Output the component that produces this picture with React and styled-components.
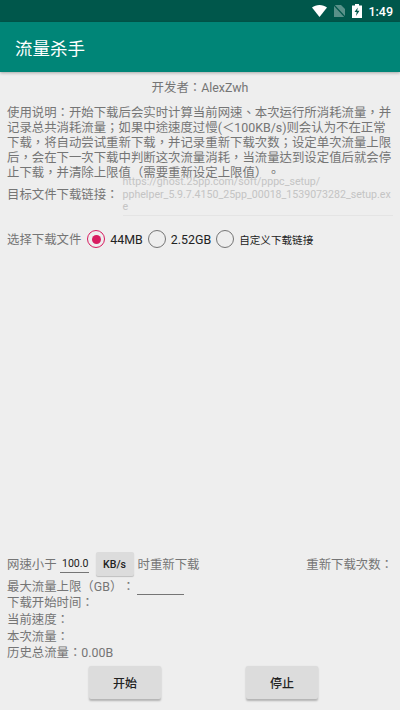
import React from "react";
import styled, { createGlobalStyle } from "styled-components";

const Global = createGlobalStyle`
  html, body {
    margin: 0;
    padding: 0;
    background: #eeeeee;
  }
  * {
    box-sizing: border-box;
  }
`;

const Screen = styled.div`
  width: 400px;
  height: 710px;
  display: flex;
  flex-direction: column;
  overflow: hidden;
  background: #eeeeee;
  font-family: Roboto, "Noto Sans CJK TC", sans-serif;
  font-size: 12.4px;
  color: #757575;
  text-spacing-trim: space-all;
`;

const StatusBar = styled.div`
  height: 22px;
  flex: none;
  background: #00574b;
  display: flex;
  align-items: center;
  justify-content: flex-end;
  padding-right: 7px;
  color: #ffffff;
  font-size: 12.5px;
  font-weight: 500;
  svg {
    display: block;
  }
`;

const Clock = styled.span`
  margin-left: 6px;
`;

const AppBar = styled.div`
  height: 50px;
  flex: none;
  background: #008577;
  display: flex;
  align-items: center;
  padding-left: 15px;
  color: #ffffff;
  font-size: 17.5px;
  box-shadow: 0 1px 3px rgba(0, 0, 0, 0.3);
  position: relative;
`;

const Content = styled.div`
  flex: 1;
  display: flex;
  flex-direction: column;
  padding: 0 7px;
`;

const Developer = styled.div`
  text-align: center;
  line-height: 16px;
  margin-top: 8px;
`;

const Description = styled.div`
  line-height: 15px;
  margin-top: 9px;
  white-space: nowrap;
`;

const LinkRow = styled.div`
  display: flex;
  align-items: center;
  margin-top: -4px;
`;

const LinkLabel = styled.span`
  margin-bottom: 3px;
`;

const LinkValue = styled.div`
  margin-left: 4px;
  flex: 1;
  font-size: 10.6px;
  line-height: 12.5px;
  color: #c4c4c4;
  padding-bottom: 1px;
  border-bottom: 1px solid #e4e4e4;
  word-break: break-all;
`;

const RadioRow = styled.div`
  display: flex;
  align-items: center;
  margin-top: 11.5px;
  height: 24px;
`;

const RadioLabel = styled.span`
  color: #222222;
  font-size: ${(p) => p.$size || "12.4px"};
  margin-left: 5px;
  margin-right: 5px;
`;

const RadioCircle = styled.span`
  width: 18px;
  height: 18px;
  flex: none;
  border-radius: 50%;
  border: 1.8px solid ${(p) => (p.$checked ? "#d81b60" : "#757575")};
  display: flex;
  align-items: center;
  justify-content: center;
  margin-left: ${(p) => p.$left || "0"};
  &::after {
    content: "";
    display: ${(p) => (p.$checked ? "block" : "none")};
    width: 9px;
    height: 9px;
    border-radius: 50%;
    background: #d81b60;
  }
`;

const Bottom = styled.div`
  margin-top: auto;
  display: flex;
  flex-direction: column;
`;

const SpeedRow = styled.div`
  display: flex;
  align-items: center;
  height: 25px;
  margin-bottom: 1px;
`;

const InlineInput = styled.span`
  display: inline-block;
  width: ${(p) => p.$width};
  height: 18px;
  margin-left: ${(p) => p.$left};
  border-bottom: 1px solid #757575;
  font-size: 10.6px;
  line-height: 17px;
  color: #222222;
  text-align: right;
`;

const UnitButton = styled.span`
  width: 38px;
  height: 24px;
  margin: 0 4px 0 7px;
  background: #dcdcdc;
  border-radius: 2px;
  box-shadow: 0 1px 1px rgba(0, 0, 0, 0.2);
  display: flex;
  align-items: center;
  justify-content: center;
  color: #222222;
  font-size: 10.6px;
  font-weight: 500;
`;

const Retry = styled.span`
  margin-left: auto;
`;

const InfoRow = styled.div`
  display: flex;
  align-items: center;
  height: 16.6px;
`;

const Buttons = styled.div`
  display: flex;
  justify-content: space-between;
  padding: 0 75px 0 82px;
  margin-top: 5.5px;
  margin-bottom: 11px;
`;

const ActionButton = styled.button`
  width: 72px;
  height: 33px;
  padding: 0;
  border: none;
  border-radius: 2px;
  background: #dcdcdc;
  box-shadow: 0 1.5px 2px rgba(0, 0, 0, 0.25);
  color: #222222;
  font-family: inherit;
  font-size: 12px;
  font-weight: 500;
`;

function WifiIcon() {
  return (
    <svg width="15" height="12" viewBox="0 0 15 12">
      <path d="M0 2.4C2 .9 4.6 0 7.5 0s5.5 .9 7.5 2.4L7.5 12z" fill="#fff" />
    </svg>
  );
}

function NoSimIcon() {
  return (
    <svg width="11" height="12" viewBox="0 0 11 12" style={{ marginLeft: 7 }}>
      <path d="M0 0h7l4 4v8H0z" fill="#fff" opacity="0.35" />
      <path d="M0 0l11 12" stroke="#00574b" strokeWidth="1.2" />
    </svg>
  );
}

function BatteryIcon() {
  return (
    <svg width="10" height="14" viewBox="0 0 10 14" style={{ marginLeft: 7 }}>
      <path
        fillRule="evenodd"
        d="M3 0h4v1.500h3V14H0V1.500h3zM5.800 3.500L2.500 8h2.200L4 12l3.500-5.200H5.200z"
        fill="#fff"
      />
    </svg>
  );
}

export default function App() {
  return (
    <Screen>
      <Global />
      <StatusBar>
        <WifiIcon />
        <NoSimIcon />
        <BatteryIcon />
        <Clock>1:49</Clock>
      </StatusBar>
      <AppBar>流量杀手</AppBar>
      <Content>
        <Developer>开发者：AlexZwh</Developer>
        <Description>
          使用说明：开始下载后会实时计算当前网速、本次运行所消耗流量，并
          <br />
          记录总共消耗流量；如果中途速度过慢(＜100KB/s)则会认为不在正常
          <br />
          下载，将自动尝试重新下载，并记录重新下载次数；设定单次流量上限
          <br />
          后，会在下一次下载中判断这次流量消耗，当流量达到设定值后就会停
          <br />
          止下载，并清除上限值（需要重新设定上限值）。
        </Description>
        <LinkRow>
          <LinkLabel>目标文件下载链接：</LinkLabel>
          <LinkValue>
            https://ghost.25pp.com/soft/pppc_setup/
            <br />
            pphelper_5.9.7.4150_25pp_00018_1539073282_setup.exe
          </LinkValue>
        </LinkRow>
        <RadioRow>
          选择下载文件
          <RadioCircle $checked $left="6px" />
          <RadioLabel>44MB</RadioLabel>
          <RadioCircle />
          <RadioLabel>2.52GB</RadioLabel>
          <RadioCircle />
          <RadioLabel $size="10.6px">自定义下载链接</RadioLabel>
        </RadioRow>
        <Bottom>
          <SpeedRow>
            网速小于
            <InlineInput $width="29px" $left="3px">100.0</InlineInput>
            <UnitButton>KB/s</UnitButton>
            时重新下载
            <Retry>重新下载次数：</Retry>
          </SpeedRow>
          <InfoRow>
            最大流量上限（GB）：
            <InlineInput $width="47px" $left="2px" />
          </InfoRow>
          <InfoRow>下载开始时间：</InfoRow>
          <InfoRow>当前速度：</InfoRow>
          <InfoRow>本次流量：</InfoRow>
          <InfoRow>历史总流量：0.00B</InfoRow>
          <Buttons>
            <ActionButton>开始</ActionButton>
            <ActionButton>停止</ActionButton>
          </Buttons>
        </Bottom>
      </Content>
    </Screen>
  );
}
